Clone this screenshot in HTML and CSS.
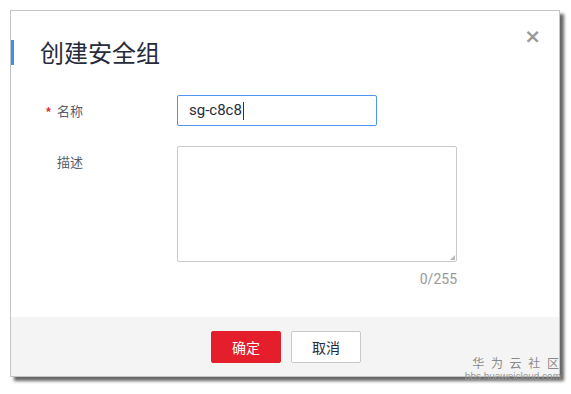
FILE: index.html
```html
<!DOCTYPE html>
<html lang="zh">
<head>
<meta charset="utf-8">
<link rel="stylesheet" href="styles.css">
</head>
<body>
<div class="dialog">
  <div class="header">
    <span class="accent"></span>
    <h1 class="title">创建安全组</h1>
    <span class="close">×</span>
  </div>
  <div class="body">
    <div class="row">
      <label class="label"><span class="req">*</span>名称</label>
      <div class="input">sg-c8c8<span class="caret"></span></div>
    </div>
    <div class="row row-desc">
      <label class="label">描述</label>
      <div class="field">
        <div class="textarea"><span class="grip"></span></div>
        <div class="count">0/255</div>
      </div>
    </div>
  </div>
  <div class="footer">
    <button class="btn btn-primary">确定</button>
    <button class="btn">取消</button>
  </div>
  <div class="watermark">
    <div class="wm1">华 为 云 社 区</div>
    <div class="wm2">bbs.huaweicloud.com</div>
  </div>
</div>
</body>
</html>
```
FILE: styles.css
```css
html, body {
  margin: 0;
  padding: 0;
  background: #fff;
}
body {
  font-family: Roboto, "Noto Sans CJK SC", sans-serif;
  color: #333;
  width: 571px;
  height: 394px;
  overflow: hidden;
}
.dialog {
  position: relative;
  margin: 10px 0 0 10px;
  width: 548px;
  height: 365px;
  border: 1px solid #c4c4c4;
  background: #fff;
  box-shadow: 4px 4px 3px rgba(0,0,0,0.6);
  display: flex;
  flex-direction: column;
}
.header {
  position: relative;
  height: 72px;
  display: flex;
  align-items: flex-start;
}
.accent {
  width: 3px;
  height: 25px;
  background: #3e8ef7;
  margin-top: 29px;
}
.title {
  margin: 25px 0 0 26px;
  font-size: 24px;
  font-weight: normal;
  color: #252b3a;
  line-height: 32px;
  font-family: "Noto Sans CJK SC", sans-serif;
}
.close {
  position: absolute;
  right: 18px;
  top: 15px;
  font-size: 20px;
  color: #9a9a9a;
  font-family: "DejaVu Sans", sans-serif;
  font-weight: bold;
  line-height: 20px;
}
.body {
  flex: 1;
  padding-top: 12px;
}
.row {
  display: flex;
  align-items: center;
}
.label {
  width: 166px;
  box-sizing: border-box;
  font-size: 13px;
  color: #575d6c;
  font-family: "Noto Sans CJK SC", sans-serif;
  position: relative;
  padding-left: 46px;
}
.req {
  position: absolute;
  left: 34px;
  top: 1px;
  color: #e02020;
  font-size: 15px;
}
.input {
  height: 29px;
  border: 1px solid #4f95f0;
  border-radius: 2px;
  font-size: 15px;
  color: #252b3a;
  line-height: 29px;
  padding-left: 11px;
  width: 187px;
  display: flex;
  align-items: center;
}
.caret {
  display: inline-block;
  width: 1px;
  height: 18px;
  background: #333;
  margin-left: 1px;
}
.row-desc {
  margin-top: 20px;
  align-items: flex-start;
}
.row-desc .label {
  margin-top: 6px;
}
.field {
  display: flex;
  flex-direction: column;
  align-items: flex-end;
}
.textarea {
  position: relative;
  width: 278px;
  height: 114px;
  border: 1px solid #c9c9c9;
  border-radius: 2px;
}
.grip {
  position: absolute;
  right: 1px;
  bottom: 1px;
  width: 0;
  height: 0;
  border-left: 5px solid transparent;
  border-bottom: 5px solid #bbb;
}
.count {
  margin-top: 9px;
  font-size: 14px;
  color: #999;
}
.footer {
  height: 59px;
  background: #f4f4f4;
  display: flex;
  justify-content: center;
  align-items: center;
  gap: 10px;
  padding-left: 2px;
}
.btn {
  width: 70px;
  height: 32px;
  border: 1px solid #c8c8c8;
  border-radius: 2px;
  background: #fff;
  font-size: 14px;
  color: #252b3a;
  font-family: "Noto Sans CJK SC", sans-serif;
  padding: 0;
}
.btn-primary {
  background: #e41f2b;
  border-color: #e41f2b;
  color: #fff;
}
.watermark {
  position: absolute;
  right: -2px;
  bottom: -6px;
  text-align: right;
  color: #8a8a8a;
  display: flex;
  flex-direction: column;
  align-items: flex-end;
  gap: 3px;
}
.wm1 {
  font-size: 12px;
  line-height: 12px;
  font-family: "Noto Sans CJK SC", sans-serif;
  letter-spacing: 2px;
}
.wm2 {
  font-size: 10px;
  line-height: 10px;
  font-family: "Liberation Sans", sans-serif;
  color: #999;
}
```
